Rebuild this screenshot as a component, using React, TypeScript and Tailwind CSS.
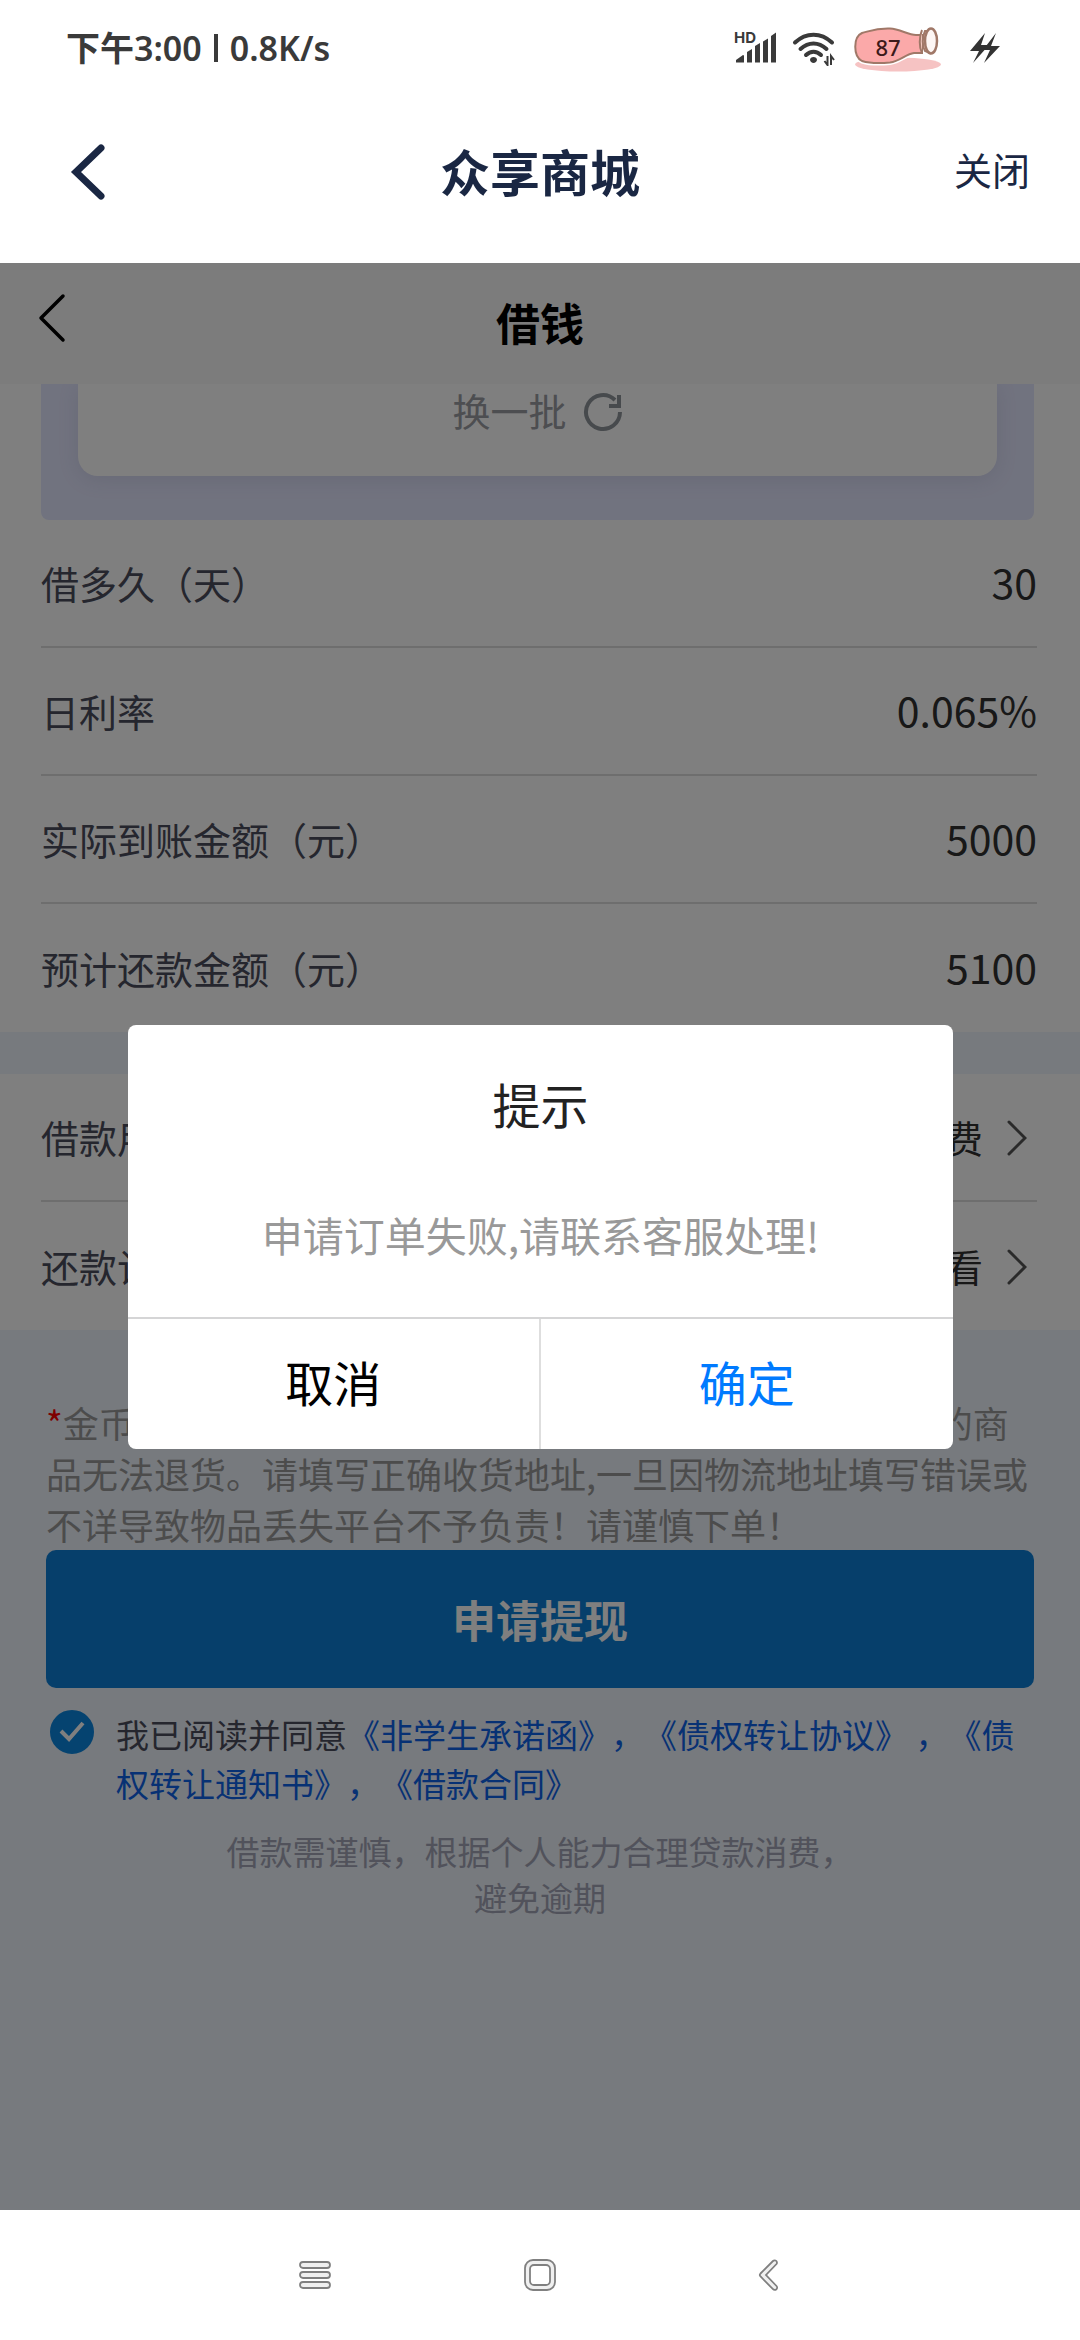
import React, { useState } from 'react';
import clsx from 'clsx';

interface RowProps {
  label: string;
  value: string;
  arrow?: boolean;
  last?: boolean;
}

const loanInfo = [
  { label: '借多久（天）', value: '30' },
  { label: '日利率', value: '0.065%' },
  { label: '实际到账金额（元）', value: '5000' },
  { label: '预计还款金额（元）', value: '5100' },
];

const loanLinks = [
  { label: '借款用途', value: '个人消费' },
  { label: '还款计划', value: '点击查看' },
];

const SignalIcon = () => (
  <svg width="44" height="44" viewBox="0 -4 44 44" fill="#3a3a3a" aria-hidden="true">
    <text x="0" y="13" fontSize="15" fontWeight="700" fontFamily="Inter, sans-serif">HD</text>
    <path d="M2 32.5v-2.5l7-5a1 1 0 0 1 1 1v6.5z" />
    <path d="M13 22l5-3v13.5h-5z" />
    <path d="M21 16l5-3v19.5h-5z" />
    <path d="M29 11.5l5-3v24h-5z" />
    <path d="M37 6l5-3.5v30h-5z" />
  </svg>
);

const WifiIcon = () => (
  <svg width="44" height="36" viewBox="0 0 44 36" fill="none" stroke="#3a3a3a" strokeWidth="4" strokeLinecap="round" aria-hidden="true">
    <path d="M3 12.5C14 2 29 2 40 12.5" />
    <path d="M8.5 19C16.5 11.5 26.5 11.5 34.5 19" />
    <path d="M14 25C18.5 20.5 24.5 20.5 29 25" />
    <path d="M21.5 27c2 0 3.500 1.300 3.500 2.800s-1.800 3.200-3.500 3.200-3.500-1.700-3.500-3.200 1.500-2.800 3.500-2.800z" fill="#3a3a3a" stroke="none" />
    <path d="M35.5 26v9l-3-4M39 35v-9l3 4" strokeWidth="2" strokeLinecap="butt" />
  </svg>
);

const bottle = 'M8 6C16 4 22 1 36 1.5c10 .5 18 6.5 26 6.500h6v18h-8c-8 1-14 8-24 9.500-10 1-20 1-28-1.500C-1 29-1 10 8 6z';

const BatteryIcon = () => (
  <svg width="88" height="48" viewBox="0 -3 88 48" aria-hidden="true">
    <ellipse cx="44" cy="37.5" rx="43" ry="7" fill="#f6c3c3" />
    <path d={bottle} fill="#fba9a9" stroke="#fff" strokeWidth="5" />
    <path d={bottle} fill="#fba9a9" stroke="#a07868" strokeWidth="2" />
    <path d="M68 3c-3 7-3 17 0 23M71 4h5v22l-5-2c-3-5-3-14 0-20z" fill="#f3c9c0" stroke="#a07868" strokeWidth="2" />
    <ellipse cx="77" cy="14" rx="6" ry="12.5" fill="#fdf6f4" stroke="#a07868" strokeWidth="2.5" />
    <text x="34" y="29" textAnchor="middle" fontSize="22" fontWeight="500" fontFamily="'Noto Sans', sans-serif" fill="#3d1a1a">87</text>
  </svg>
);

const BoltIcon = () => (
  <svg width="30" height="30" viewBox="0 0 30 30" fill="#333" aria-hidden="true">
    <path d="M15 0L0 18h9L3 30 19 12h-8z" />
    <path d="M26 0L13 17h7l-6 13 16-17h-9z" />
  </svg>
);

const RowArrow = () => (
  <svg width="20" height="36" viewBox="0 0 20 36" fill="none" stroke="#555" strokeWidth="3" strokeLinecap="round" aria-hidden="true">
    <path d="M2 2l16 16L2 34" />
  </svg>
);

const Row: React.FC<RowProps> = ({ label, value, arrow, last }) => (
  <div className={clsx('flex h-32 items-center justify-between pb-0.5', !last && 'border-b-2 border-[#dcdcdc]')}>
    <span className="text-[38px] text-[#4b4d5c]">{label}</span>
    <span className="flex items-center gap-6 text-[41px] text-[#303030]">
      <span className={clsx(arrow && 'text-[38px]')}>{value}</span>
      {arrow && <span className="pr-2.5 pt-1"><RowArrow /></span>}
    </span>
  </div>
);

const StatusBar = () => (
  <div className="flex h-24 items-center justify-between pl-[66px] pr-20">
    <div className="flex items-center gap-3 font-['Noto_Sans','Noto_Sans_CJK_SC',sans-serif] text-[34px] font-semibold text-[#3a3a3a]">
      <span>下午3:00</span>
      <span className="h-7 w-1 bg-[#3a3a3a]" />
      <span>0.8K/s</span>
    </div>
    <div className="flex items-center">
      <SignalIcon />
      <span className="ml-3.5"><WifiIcon /></span>
      <span className="ml-[18px]"><BatteryIcon /></span>
      <span className="ml-7"><BoltIcon /></span>
    </div>
  </div>
);

const AppHeader = () => (
  <header className="grid h-[167px] grid-cols-3 items-start px-[50px] pt-[41px] text-[#1a2743]">
    <button type="button" aria-label="返回" className="w-fit pl-5 pt-1.5">
      <svg width="36" height="58" viewBox="0 0 36 58" fill="none" stroke="#1a2743" strokeWidth="7" strokeLinecap="round">
        <path d="M31 5L6 29l25 24" />
      </svg>
    </button>
    <h1 className="text-center text-[50px] font-bold leading-[66px]">众享商城</h1>
    <button type="button" className="justify-self-end text-[38px] leading-[64px]">关闭</button>
  </header>
);

const SystemNav = () => (
  <nav className="flex h-[130px] items-center justify-center gap-[193px] bg-white">
    <button type="button" aria-label="最近任务">
      <svg width="32" height="32" viewBox="0 0 32 32" fill="#f0f0f0" stroke="#808080" strokeWidth="1.8">
        <rect x="1" y="3" width="30" height="6" rx="3" />
        <rect x="1" y="13" width="30" height="6" rx="3" />
        <rect x="1" y="23" width="30" height="6" rx="3" />
      </svg>
    </button>
    <button type="button" aria-label="主屏幕">
      <svg width="32" height="32" viewBox="0 0 32 32" fill="#f0f0f0" stroke="#808080" strokeWidth="1.8">
        <rect x="1" y="1" width="30" height="30" rx="8" />
        <rect x="6" y="6" width="20" height="20" rx="4" fill="#fff" />
      </svg>
    </button>
    <button type="button" aria-label="后退">
      <svg width="32" height="32" viewBox="-4 0 32 32" fill="#f0f0f0" stroke="#808080" strokeWidth="1.8">
        <path d="M22.5 1.5a2.300 2.300 0 0 1 1 3.500L13 16l10.500 11a2.300 2.300 0 0 1-3.500 3.200L7.500 17.500a2.200 2.200 0 0 1 0-3L20 2a2.300 2.300 0 0 1 2.500-.5z" />
      </svg>
    </button>
  </nav>
);

export default function App() {
  const [agreed, setAgreed] = useState(true);

  return (
    <div className="flex min-h-screen flex-col bg-white font-['Noto_Sans_CJK_SC',sans-serif] [text-spacing-trim:space-all]">
      <StatusBar />
      <AppHeader />

      <main className="relative flex-1 bg-[#eef4fc]">
        <div className="grid h-[121px] grid-cols-3 items-start bg-[#f8f8f8] px-[38px] pt-[26px] text-black">
          <button type="button" aria-label="返回" className="w-fit pt-1">
            <svg width="28" height="50" viewBox="0 0 28 50" fill="none" stroke="#000" strokeWidth="3.5" strokeLinecap="round" strokeLinejoin="round">
              <path d="M25 3L3 25l22 22" />
            </svg>
          </button>
          <h2 className="text-center text-[44px] font-bold leading-[66px]">借钱</h2>
        </div>

        <section className="overflow-hidden bg-white">
          <div className="ml-[41px] mr-[46px] rounded-b-lg bg-[#e3e6fe] px-[37px] pb-11">
            <div className="h-[92px] rounded-b-[20px] bg-white shadow-[0_4px_20px_rgba(120,120,150,0.16)]">
              <button type="button" className="mx-auto flex items-center gap-4 text-[38px] leading-[52px] text-[#9a9ca3]">
                换一批
                <svg width="40" height="40" viewBox="0 0 40 40" fill="none" stroke="#8f959b" strokeWidth="4" className="mt-1">
                  <path d="M37 20A17 17 0 1 1 32 8" />
                  <path d="M36 3v11H26" />
                </svg>
              </button>
            </div>
          </div>
          <div className="pl-[41px] pr-[43px]">
            {loanInfo.map((row, i) => (
              <Row key={row.label} {...row} last={i === loanInfo.length - 1} />
            ))}
          </div>
        </section>

        <section className="mt-[42px] bg-white pl-[41px] pr-[43px]">
          {loanLinks.map((row, i) => (
            <Row key={row.label} {...row} arrow last={i === loanLinks.length - 1} />
          ))}
        </section>

        <section className="px-[46px] pt-[67px]">
          <p className="text-[36px] leading-[51px] text-[#999]">
            <span className="text-[#f00]">*</span>
            金币商城商品为平台特惠兑换专用商品,下单成功后兑换的商品无法退货。请填写正确收货地址,一旦因物流地址填写错误或不详导致物品丢失平台不予负责！请谨慎下单！
          </p>
          <button type="button" className="h-[138px] w-full rounded-[10px] bg-[#0c7ed6] text-[44px] font-bold text-white">
            申请提现
          </button>

          <div className="mt-[22px] flex items-start gap-[22px] pl-1">
            <span className="relative size-11 shrink-0">
              <input
                id="agree"
                type="checkbox"
                checked={agreed}
                onChange={e => setAgreed(e.target.checked)}
                className="block size-11 appearance-none rounded-full border-2 border-[#0a86e0] checked:bg-[#0a86e0]"
              />
              {agreed && (
                <svg viewBox="0 0 44 44" fill="none" stroke="#fff" strokeWidth="4" className="pointer-events-none absolute inset-0">
                  <path d="M11 21l8 8 14-16" />
                </svg>
              )}
            </span>
            <p className="text-[33px] leading-[49px] text-[#0f63e8]">
              <label htmlFor="agree" className="text-[#4b4d5c]">我已阅读并同意</label>
              <a href="#promise">《非学生承诺函》</a>，<a href="#transfer">《债权转让协议》</a> ，<a href="#notice">《债权转让通知书》</a>，<a href="#contract">《借款合同》</a>
            </p>
          </div>

          <p className="mx-auto mt-5 w-[640px] text-center text-[33px] leading-[46px] text-[#a3a5b6]">
            借款需谨慎，根据个人能力合理贷款消费，避免逾期
          </p>
        </section>

        <div className="absolute inset-0 flex items-center justify-center bg-black/50 pl-32 pr-[127px]">
          <div role="dialog" aria-labelledby="tip-title" className="w-full overflow-hidden rounded-lg bg-white text-center">
            <h3 id="tip-title" className="pt-[45px] text-[48px] leading-[66px] text-[#222]">提示</h3>
            <p className="pb-[53px] pt-[68px] text-[41px] leading-[60px] text-[#999]">申请订单失败,请联系客服处理!</p>
            <div className="grid h-[132px] grid-cols-2 border-t-2 border-[#d5d5d6] text-[48px]">
              <button type="button" className="border-r-2 border-[#dedede] pb-1.5 text-black">取消</button>
              <button type="button" className="pb-1.5 text-[#007aff]">确定</button>
            </div>
          </div>
        </div>
      </main>

      <SystemNav />
    </div>
  );
}
